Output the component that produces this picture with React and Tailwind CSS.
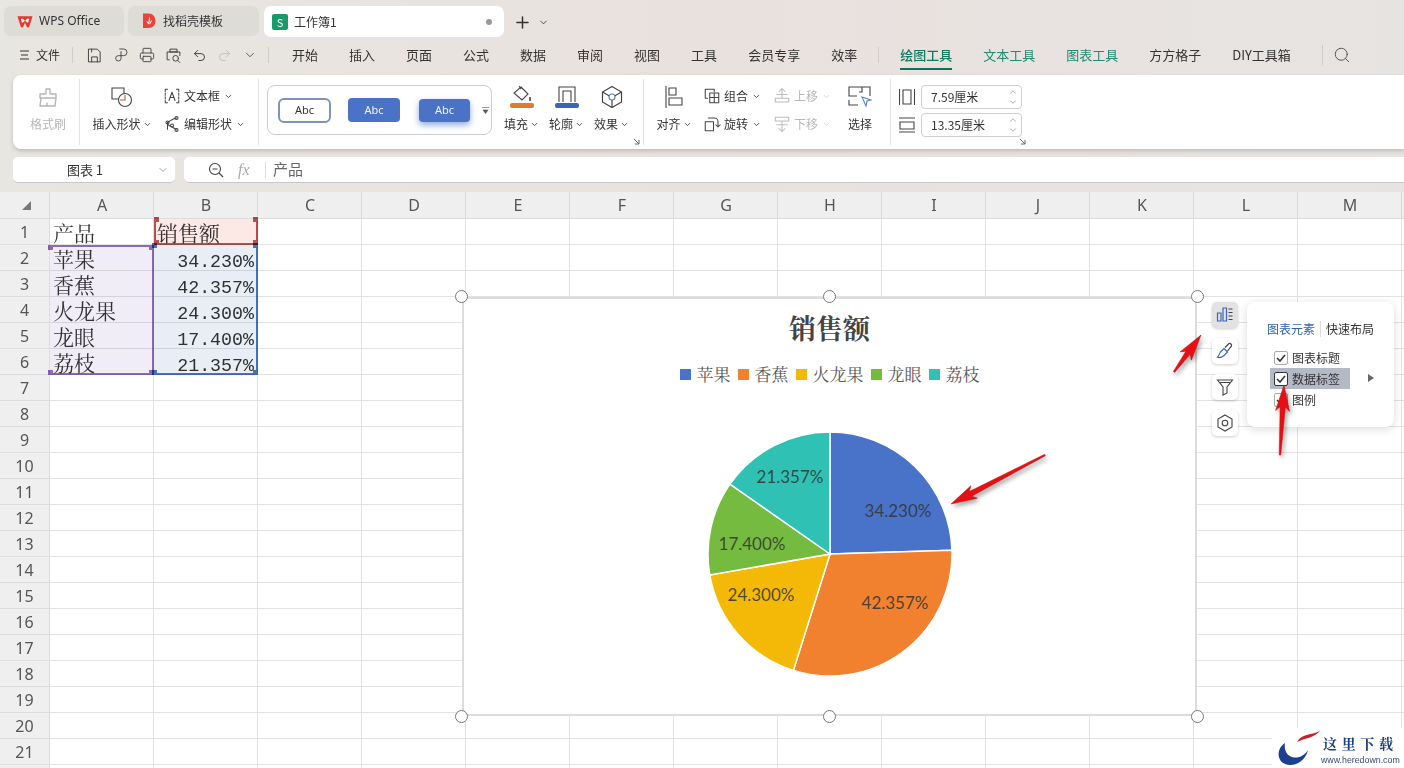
import React from 'react';
import { ChevronDown, ChevronUp, Plus, Printer, Redo2, Search, Undo2 } from 'lucide-react';

const uiFont = { fontFamily: '"Noto Sans CJK SC", "Noto Sans", sans-serif' };
const cellFont = '"Liberation Mono", "Noto Serif CJK SC", "Noto Sans CJK SC", monospace';

const COLS = ['A', 'B', 'C', 'D', 'E', 'F', 'G', 'H', 'I', 'J', 'K', 'L', 'M', ''];
const ROWS = Array.from({ length: 22 }, (_, i) => i + 1);

const TABLE = {
  '1-0': '产品',
  '1-1': '销售额',
  '2-0': '苹果',
  '2-1': '34.230%',
  '3-0': '香蕉',
  '3-1': '42.357%',
  '4-0': '火龙果',
  '4-1': '24.300%',
  '5-0': '龙眼',
  '5-1': '17.400%',
  '6-0': '荔枝',
  '6-1': '21.357%',
};

const PIE = [
  { name: '苹果', value: 34.23, color: '#4873c8', label: '34.230%', x: 193, y: 82 },
  { name: '香蕉', value: 42.357, color: '#f1812f', label: '42.357%', x: 190, y: 174 },
  { name: '火龙果', value: 24.3, color: '#f4b906', label: '24.300%', x: 56, y: 166 },
  { name: '龙眼', value: 17.4, color: '#74bb3f', label: '17.400%', x: 47, y: 115 },
  { name: '荔枝', value: 21.357, color: '#2fc1b4', label: '21.357%', x: 85, y: 48 },
];

function Ico({ size = 20, children, className = '', stroke = '#444' }) {
  return (
    <svg width={size} height={size} viewBox="0 0 24 24" fill="none" stroke={stroke} strokeWidth="1.4" strokeLinecap="round" strokeLinejoin="round" className={`shrink-0 ${className}`}>
      {children}
    </svg>
  );
}

function Caret({ gray }) {
  return <ChevronDown size={9} strokeWidth={2.4} className={gray ? 'text-gray-300 shrink-0' : 'text-gray-700 shrink-0'} />;
}

function BigBtn({ icon, label, caret, width, gray }) {
  return (
    <div className={`flex flex-col items-center shrink-0 ${width}`}>
      <div className="h-[32px] flex items-center justify-center">{icon}</div>
      <div className={`mt-[2px] flex items-center gap-[2px] text-[12px] leading-[18px] ${gray ? 'text-[#b5b5b5]' : 'text-[#333]'}`}>
        {label}
        {caret && <Caret />}
      </div>
    </div>
  );
}

function SmallBtn({ icon, label, gray }) {
  return (
    <div className={`flex items-center h-[18px] text-[12px] ${gray ? 'text-[#b8b8b8]' : 'text-[#333]'}`}>
      <div className="w-[18px] flex justify-center mr-[3px]">{icon}</div>
      <span>{label}</span>
      <span className="ml-[4px]"><Caret gray={gray} /></span>
    </div>
  );
}

function Launcher() {
  return (
    <svg width="7" height="7" viewBox="0 0 7 7" fill="none" stroke="#666" strokeWidth="1" className="absolute right-[3px] bottom-0">
      <path d="M1 1l5 5M6 2v4H2" />
    </svg>
  );
}

function SizeInput({ value }) {
  return (
    <div className="w-[101px] h-[24px] bg-white border border-[#cfcfcf] rounded-[4px] flex items-center justify-between pl-[9px] pr-[3px] text-[12px] text-[#333]">
      <span>{value}</span>
      <div className="flex flex-col text-gray-500">
        <ChevronUp size={10} strokeWidth={1.4} />
        <ChevronDown size={10} strokeWidth={1.4} />
      </div>
    </div>
  );
}

function TopTabs() {
  return (
    <div className="h-[37px] flex items-end gap-[4px] pl-[4px] text-[12px] text-[#333]">
      <div className="w-[120px] h-[30px] rounded-[7px] bg-[#dedcd7] flex items-center pl-[13px] mb-[1px]">
        <svg width="16" height="13" viewBox="0 0 17 13" className="mr-[6px]">
          <path d="M0.5 1H16.5L12.8 12.5H10.6L8.5 7.5L6.4 12.5H4.2Z" fill="#e8372c" />
          <path d="M4 3.5H6.5L8.5 6.5L10.5 3.5H13L11.8 7.5H10.6L8.5 5.2L6.4 7.5H5.2Z" fill="#fff" />
        </svg>
        <span style={{ fontFamily: '"Noto Sans", sans-serif' }}>WPS Office</span>
      </div>
      <div className="w-[131px] h-[30px] rounded-[7px] bg-[#dedcd7] flex items-center pl-[14px] mb-[1px]">
        <svg width="14" height="16" viewBox="0 0 14 16" className="mr-[7px]">
          <path d="M1 0.5H6.5C11 0.5 13.5 4 13.5 8C13.5 12 11 15 6.5 15H1Z" fill="#e8443c" />
          <path d="M7.5 3.5C8 6 8.5 8 6.5 11.5C5.5 10 4.5 9 4.5 8C5.5 8.5 6 8.8 6.5 9.5C7 7.5 6.8 5.5 7.5 3.5ZM10 7C10 9 8.5 10.5 7.3 11.5C7.8 9.5 8.5 8 10 7Z" fill="#fff" />
        </svg>
        <span>找稻壳模板</span>
      </div>
      <div className="w-[240px] h-[31px] ml-[1px] rounded-[7px] bg-white flex items-center pl-[8px]">
        <div className="w-[16px] h-[16px] bg-[#1a9a6c] rounded-[2px] text-white text-[11px] leading-[16px] text-center mr-[6px]">S</div>
        <span>工作簿1</span>
        <span className="ml-auto mr-[12px] w-[6px] h-[6px] rounded-full bg-[#999]" />
      </div>
      <div className="h-[30px] flex items-center ml-[5px] gap-[6px] text-[#333]">
        <Plus size={19} strokeWidth={1.9} />
        <ChevronDown size={11} strokeWidth={1.8} />
      </div>
    </div>
  );
}

function MenuRow() {
  const main = ['开始', '插入', '页面', '公式', '数据', '审阅', '视图', '工具', '会员专享', '效率'];
  return (
    <div className="h-[38px] pb-[2px] flex items-center text-[13px] text-[#333]">
      <div className="flex items-center pl-[20px] w-[72px] text-[12px]">
        <svg width="9" height="10" viewBox="0 0 9 10" stroke="#333" strokeWidth="1" className="mr-[7px]"><path d="M0 1h9M1 5h7M0 9h9" /></svg>
        文件
      </div>
      <div className="w-px h-[16px] bg-[#cfcdc9]" />
      <div className="flex items-center gap-[10px] ml-[13px] w-[183px]">
        <Ico size={17}><path d="M4 3h12l4 4v14H4zM8 21v-7h8v7M8 3v4" /></Ico>
        <Ico size={16}><path d="M10 3h6a5 5 0 010 10h-4v4a4 4 0 11-4-4h4V7" /></Ico>
        <Printer size={16} strokeWidth={1.4} className="text-[#444]" />
        <Ico size={17}><path d="M7 7V3h10v4M6 18H3V7h18v5M7 7h10" /><circle cx="15" cy="16" r="4" /><path d="M18 19l3 3" /></Ico>
        <Undo2 size={15} strokeWidth={1.6} className="text-[#444]" />
        <Redo2 size={15} strokeWidth={1.4} className="text-[#bbb]" />
        <ChevronDown size={14} strokeWidth={1.6} className="text-[#555] ml-[1px]" />
      </div>
      <div className="w-px h-[16px] bg-[#cfcdc9] -ml-[1px]" />
      <div className="flex items-center gap-[31px] ml-[23px]">
        {main.map((m) => <span key={m} className="shrink-0">{m}</span>)}
      </div>
      <div className="w-px h-[16px] bg-[#cfcdc9] ml-[21px] mr-[21px]" />
      <div className="flex items-center gap-[31px]">
        <span className="relative text-[#0f7a5f] font-medium">
          绘图工具
          <span className="absolute left-0 right-0 -bottom-[5px] h-[2px] bg-[#0f6f58]" />
        </span>
        <span className="text-[#1f8a70]">文本工具</span>
        <span className="text-[#1f8a70]">图表工具</span>
        <span>方方格子</span>
        <span className="w-[61px] whitespace-nowrap">DIY工具箱</span>
      </div>
      <div className="w-px h-[20px] bg-[#cfcdc9] ml-[29px] mr-[10px]" />
      <Search size={18} strokeWidth={1.3} className="text-[#555]" />
    </div>
  );
}

function Ribbon() {
  return (
    <div className="ml-[13px] h-[74px] bg-white rounded-l-[8px] shadow-[0_2px_4px_rgba(0,0,0,0.18)] flex items-stretch py-[4px]">
      <div className="w-[67px] shrink-0 border-r border-[#e3e3e3] flex justify-center pt-[2px] pl-[4px]">
        <BigBtn
          gray
          width="w-[40px]"
          label="格式刷"
          icon={
            <Ico size={24} stroke="#b5b5b5">
              <path d="M10 4h4v5h6v4H4V9h6zM5 13l-1 8h15l1-8M11 21v-3" />
            </Ico>
          }
        />
      </div>
      <div className="w-[179px] shrink-0 border-r border-[#e3e3e3] flex pt-[2px]">
        <div className="ml-[12px]">
          <BigBtn
            caret
            width="w-[60px]"
            label="插入形状"
            icon={
              <svg width="22" height="22" viewBox="0 0 22 22" fill="none" stroke="#444" strokeWidth="1.1">
                <path d="M1 2h12v11H1z" />
                <circle cx="14" cy="14" r="6.5" fill="#fff" />
                <path d="M9 14h5V9" stroke="#d0532a" />
              </svg>
            }
          />
        </div>
        <div className="ml-[11px] flex flex-col gap-[10px] pt-[6px]">
          <SmallBtn
            label="文本框"
            icon={
              <Ico size={18}>
                <path d="M3 3v18M21 3v18M3 3h3M3 21h3M18 3h3M18 21h3" strokeDasharray="3 2" />
                <path d="M8 18l4-11 4 11M9.5 14h5" />
              </Ico>
            }
          />
          <SmallBtn
            label="编辑形状"
            icon={
              <Ico size={18}>
                <path d="M6 10c4-2 8-6 12-6M6 10c0 4 6 6 6 6s4 2 6 4M6 10L6 19" />
                <circle cx="18" cy="4" r="2" /><circle cx="6" cy="10" r="2" /><circle cx="18" cy="20" r="2" /><circle cx="12" cy="14" r="2" />
              </Ico>
            }
          />
        </div>
      </div>
      <div className="ml-[8px] mt-[6px] h-[50px] w-[225px] shrink-0 border border-[#c9ccd4] rounded-[8px] flex items-center pl-[10px] text-[11px]" style={{ fontFamily: '"Noto Sans", sans-serif' }}>
        <div className="w-[53px] h-[25px] rounded-[6px] bg-white border-2 border-[#7d93bb] text-[#333] flex items-center justify-center">Abc</div>
        <div className="w-[52px] h-[24px] ml-[17px] rounded-[4px] bg-[#4a73c8] text-[#f1f4fb] flex items-center justify-center">Abc</div>
        <div className="w-[51px] h-[23px] ml-[19px] rounded-[4px] bg-[#4a73c8] text-[#f1f4fb] flex items-center justify-center shadow-[0_3px_6px_rgba(68,114,196,0.6)]">Abc</div>
        <svg width="7" height="7" viewBox="0 0 7 7" className="ml-[12px]"><path d="M0 .5h7M1 3h5L3.5 6.5z" stroke="#555" fill="#555" strokeWidth="0.6" /></svg>
      </div>
      <div className="relative w-[152px] shrink-0 border-r border-[#e3e3e3] flex pl-[12px] gap-[10px] pt-[2px]">
        <BigBtn
          caret
          width="w-[35px]"
          label="填充"
          icon={
            <svg width="26" height="24" viewBox="0 0 26 24" fill="none" stroke="#444" strokeWidth="1.1">
              <path d="M12 2l7 7-6 6-8-7zM10 1l2 3" />
              <path d="M21 12v4" strokeWidth="1.6" />
              <rect x="1" y="18" width="24" height="5" rx="2" fill="#e07a2e" stroke="none" />
            </svg>
          }
        />
        <BigBtn
          caret
          width="w-[35px]"
          label="轮廓"
          icon={
            <svg width="26" height="24" viewBox="0 0 26 24" fill="none" stroke="#444" strokeWidth="1.1">
              <path d="M5 17V2h16v15M9 17V6h8v11" />
              <rect x="1" y="18" width="24" height="5" rx="2" fill="#3d64b4" stroke="none" />
            </svg>
          }
        />
        <BigBtn
          caret
          width="w-[35px]"
          label="效果"
          icon={
            <svg width="24" height="24" viewBox="0 0 24 24" fill="none" stroke="#444" strokeWidth="1.2">
              <path d="M12 1.5l9.5 5.5v10L12 22.5 2.5 17V7z" />
              <path d="M2.5 7l7 4M21.5 7l-7 4M12 15v7" />
              <circle cx="12" cy="12" r="3" stroke="#5b7fc7" />
            </svg>
          }
        />
        <Launcher />
      </div>
      <div className="w-[247px] shrink-0 border-r border-[#e3e3e3] flex pt-[2px]">
        <div className="ml-[11px]">
          <BigBtn
            caret
            width="w-[38px]"
            label="对齐"
            icon={
              <svg width="20" height="22" viewBox="0 0 20 22" fill="none" stroke="#444" strokeWidth="1.1">
                <path d="M2 0v22M5 2h7v7H5zM5 12h13v7H5z" />
              </svg>
            }
          />
        </div>
        <div className="ml-[10px] flex flex-col gap-[10px] pt-[6px] w-[69px]">
          <SmallBtn
            label="组合"
            icon={
              <Ico size={18}>
                <path d="M3 3h12v3M3 3v12h3M9 8h12v13H9zM15 8v13M9 14h12" />
              </Ico>
            }
          />
          <SmallBtn
            label="旋转"
            icon={
              <Ico size={18}>
                <path d="M3 9h11v12H3zM7 4h8a5 5 0 015 5v6M17 13l3 3 3-3" />
              </Ico>
            }
          />
        </div>
        <div className="ml-[1px] flex flex-col gap-[10px] pt-[6px] w-[69px]">
          <SmallBtn
            gray
            label="上移"
            icon={
              <Ico size={18} stroke="#bbb">
                <path d="M12 15V3M8 6l4-4 4 4M5 10h14M3 15h18v5H3z" />
              </Ico>
            }
          />
          <SmallBtn
            gray
            label="下移"
            icon={
              <Ico size={18} stroke="#bbb">
                <path d="M3 3h18v5H3zM5 13h14M12 8v13M8 18l4 4 4-4" />
              </Ico>
            }
          />
        </div>
        <BigBtn
          width="w-[36px]"
          label="选择"
          icon={
            <svg width="24" height="22" viewBox="0 0 24 22" fill="none" stroke="#444" strokeWidth="1.1">
              <path d="M1 4V1h21v9M1 4v6h8M1 14v5h9M14 1v5h-3" />
              <path d="M14 11l9 3-4 1-1 5z" stroke="#5b7fc7" />
            </svg>
          }
        />
      </div>
      <div className="relative w-[140px] shrink-0 flex flex-col gap-[4px] pl-[8px] pt-[6px]">
        <div className="flex items-center gap-[6px]">
          <svg width="16" height="16" viewBox="0 0 16 16" fill="none" stroke="#444" strokeWidth="1.1"><path d="M0.5 0v16M15.5 0v16M4 1h8v14H4z" /></svg>
          <SizeInput value="7.59厘米" />
        </div>
        <div className="flex items-center gap-[6px]">
          <svg width="16" height="16" viewBox="0 0 16 16" fill="none" stroke="#444" strokeWidth="1.1"><path d="M0 1h16M0 15h16M1 5h14v7H1z" /></svg>
          <SizeInput value="13.35厘米" />
        </div>
        <div className="absolute left-[128px] bottom-0 w-[10px] h-[10px]"><Launcher /></div>
      </div>
    </div>
  );
}

function FormulaBar() {
  return (
    <div className="mt-[8px] h-[26px] flex gap-[9px] pl-[13px] text-[13px] text-[#333]">
      <div className="w-[162px] bg-white rounded-[5px] border-b border-[#c8c8c8] flex items-center">
        <span className="flex-1 text-center pl-[8px] pr-[8px] text-[13px]">图表 1</span>
        <ChevronDown size={12} strokeWidth={1.4} className="mr-[6px] text-gray-500" />
      </div>
      <div className="flex-1 bg-white rounded-l-[5px] border-b border-[#c8c8c8] flex items-center">
        <svg width="16" height="16" viewBox="0 0 16 16" fill="none" stroke="#444" strokeWidth="1.1" className="ml-[24px]">
          <circle cx="7" cy="7" r="5.5" /><path d="M4.5 7h5M11 11l4 4" />
        </svg>
        <span className="ml-[14px] text-[16px] text-[#aaa] italic w-[27px]" style={{ fontFamily: '"Liberation Serif", serif' }}>fx</span>
        <span className="w-px h-[16px] bg-[#ddd] mr-[7px]" />
        <span className="text-[#666] text-[15px]">产品</span>
      </div>
    </div>
  );
}

function Cell({ row, col, text }) {
  const isNumber = text && text.endsWith('%');
  return (
    <div
      className={`border-r border-b border-[#e2e2e2] bg-white whitespace-nowrap pt-[4px] leading-[26px] text-[#333] ${isNumber ? 'text-right text-[18.3px] pr-[3px]' : 'text-left text-[21px] pl-[3px]'}`}
      style={{ gridRow: row + 1, gridColumn: col + 2, fontFamily: cellFont }}
    >
      {text}
    </div>
  );
}

function RangeBox({ className, color, fill }) {
  const dot = `absolute w-[5px] h-[5px] ${color}`;
  return (
    <div className={`relative z-10 pointer-events-none mix-blend-multiply ${className} ${fill}`}>
      <span className={`${dot} -left-[2px] -top-[2px]`} />
      <span className={`${dot} -right-[2px] -top-[2px]`} />
      <span className={`${dot} -left-[2px] -bottom-[2px]`} />
      <span className={`${dot} -right-[2px] -bottom-[2px]`} />
    </div>
  );
}

function Handle({ className }) {
  return <span className={`absolute w-[13px] h-[13px] rounded-full bg-white border border-[#777] ${className}`} />;
}

function polar(cx, cy, r, deg) {
  const a = ((deg - 90) * Math.PI) / 180;
  return [cx + r * Math.cos(a), cy + r * Math.sin(a)];
}

function PieChart() {
  const total = PIE.reduce((s, p) => s + p.value, 0);
  let angle = 0;
  return (
    <svg width="250" height="250" viewBox="0 0 250 250" className="mt-[43px]">
      {PIE.map((p) => {
        const sweep = (p.value / total) * 360;
        const [x1, y1] = polar(125, 125, 122, angle);
        const [x2, y2] = polar(125, 125, 122, angle + sweep);
        const large = sweep > 180 ? 1 : 0;
        angle += sweep;
        return (
          <path key={p.name} d={`M125 125L${x1} ${y1}A122 122 0 ${large} 1 ${x2} ${y2}Z`} fill={p.color} stroke="#fff" strokeWidth="1.5" />
        );
      })}
      {PIE.map((p) => (
        <text key={p.label} x={p.x} y={p.y + 6} textAnchor="middle" fontSize="17" fill="#333" fillOpacity="0.85" style={{ fontFamily: 'Lato, sans-serif' }}>
          {p.label}
        </text>
      ))}
    </svg>
  );
}

function Chart() {
  return (
    <div className="absolute left-[462px] top-[105px] w-[735px] h-[419px] bg-white border-2 border-[#dcdcdc] flex flex-col items-center z-20">
      <div className="mt-[11px] text-[27px] leading-[36px] font-bold text-[#444]" style={{ fontFamily: '"Noto Serif CJK SC", "Noto Sans CJK SC", serif' }}>销售额</div>
      <div className="mt-[16px] flex items-center gap-[7px] h-[24px] text-[17px] text-[#595959]" style={{ fontFamily: '"Noto Serif CJK SC", "Noto Sans CJK SC", serif' }}>
        {PIE.map((p) => (
          <div key={p.name} className="flex items-center gap-[6px]">
            <span className="w-[11px] h-[11px]" style={{ background: p.color }} />
            <span>{p.name}</span>
          </div>
        ))}
      </div>
      <PieChart />
      <Handle className="-left-[9px] -top-[9px]" />
      <Handle className="left-[359px] -top-[9px]" />
      <Handle className="-right-[9px] -top-[9px]" />
      <Handle className="-left-[9px] -bottom-[9px]" />
      <Handle className="left-[359px] -bottom-[9px]" />
      <Handle className="-right-[9px] -bottom-[9px]" />
    </div>
  );
}

function SideButton({ active, children }) {
  return (
    <div className={`w-[26px] h-[26px] rounded-[5px] flex items-center justify-center shadow-[0_1px_3px_rgba(0,0,0,0.2)] ${active ? 'bg-[#e2e2e2]' : 'bg-white'}`}>
      {children}
    </div>
  );
}

function CheckItem({ label, active }) {
  return (
    <div className={`h-[21px] w-[80px] flex items-center pl-[4px] gap-[4px] text-[12px] text-[#333] ${active ? 'bg-[#b4b9c6]' : ''}`}>
      <span className={`w-[14px] h-[14px] rounded-[2px] bg-white flex items-center justify-center border ${active ? 'border-[#333]' : 'border-[#aaa]'}`}>
        <svg width="10" height="8" viewBox="0 0 10 8" fill="none" stroke="#333" strokeWidth="1.6"><path d="M1 4l3 3 5-6" /></svg>
      </span>
      <span>{label}</span>
    </div>
  );
}

function ChartTools() {
  return (
    <div className="absolute left-[1212px] top-[110px] flex gap-[9px] z-20">
      <div className="flex flex-col gap-[10px]">
        <SideButton active>
          <svg width="18" height="18" viewBox="0 0 18 18" fill="none" stroke="#3d64b4" strokeWidth="1.2">
            <path d="M1.5 7H5v8H1.5zM7 2h3.5v13H7z" />
            <path d="M12.5 3h4M12.5 6.5h4M12.5 10h4M12.5 13.5h4" stroke="#444" />
          </svg>
        </SideButton>
        <SideButton>
          <svg width="18" height="18" viewBox="0 0 18 18" fill="none" stroke="#3d64b4" strokeWidth="1.2">
            <path d="M8 6.5l3.5 3.5-3.5 3.5C5.5 15.5 3 15.8 1.5 15.2 3 14 3 12 4.5 10z" />
            <path d="M9 5.5l4-4c1.2-.8 3.2 1.2 2.4 2.6L11.5 9" stroke="#444" />
          </svg>
        </SideButton>
        <SideButton>
          <svg width="18" height="18" viewBox="0 0 18 18" fill="none" stroke="#444" strokeWidth="1.1">
            <path d="M1.5 2h15L11 9v6l-4 2V9zM4 4.5h10" />
          </svg>
        </SideButton>
        <SideButton>
          <svg width="18" height="18" viewBox="0 0 18 18" fill="none" stroke="#444" strokeWidth="1.1">
            <path d="M9 1l7 4v8l-7 4-7-4V5z" />
            <circle cx="9" cy="9" r="2.8" />
          </svg>
        </SideButton>
      </div>
      <div className="relative w-[147px] h-[125px] bg-white rounded-[8px] shadow-[0_2px_10px_rgba(0,0,0,0.15)] text-[#333]">
        <div className="flex items-center h-[18px] mt-[18px] pl-[20px] text-[12px]">
          <span className="text-[#2f5fae]">图表元素</span>
          <span className="w-px h-[16px] bg-[#ddd] mx-[5px]" />
          <span>快速布局</span>
        </div>
        <div className="mt-[9px] ml-[23px] flex flex-col">
          <CheckItem label="图表标题" />
          <CheckItem label="数据标签" active />
          <CheckItem label="图例" />
        </div>
        <span className="absolute left-[121px] top-[72px] w-0 h-0 border-y-[4px] border-y-transparent border-l-[6px] border-l-[#666]" />
      </div>
    </div>
  );
}

function RedArrow({ x1, y1, x2, y2 }) {
  const len = Math.hypot(x2 - x1, y2 - y1);
  const ux = (x2 - x1) / len;
  const uy = (y2 - y1) / len;
  const nx = -uy;
  const ny = ux;
  const at = (along, off) => `${x1 + ux * along + nx * off},${y1 + uy * along + ny * off}`;
  const neck = len - 22;
  const points = [at(0, -0.8), at(neck, -2.6), at(neck - 4, -7), at(len, 0), at(neck - 4, 7), at(neck, 2.6), at(0, 0.8)].join(' ');
  return <polygon points={points} fill="#e60f14" stroke="#c40c10" strokeWidth="0.5" style={{ filter: 'drop-shadow(2px 3px 2px rgba(0,0,0,0.35))' }} />;
}

function Watermark() {
  return (
    <div className="absolute right-0 bottom-0 w-[132px] h-[40px] bg-white z-30">
      <svg width="50" height="40" viewBox="0 0 50 40" className="absolute left-0 top-0">
        <path d="M13 15C5 20 4 32 13 36C23 40 34 32 36 22C32 28 26 31 20 29C14 27 12 21 13 15Z" fill="#1d3f8f" />
        <path d="M25 14C30 5 38 8 48 3C42 10 33 10 25 14Z" fill="#c8212a" />
      </svg>
      <div className="absolute left-[51px] top-[6px] w-[70px] flex justify-between text-[14px] leading-[18px] font-bold text-[#1d3f7f]" style={{ fontFamily: '"Noto Serif CJK SC", "Noto Sans CJK SC", serif' }}>
        <span>这</span><span>里</span><span>下</span><span>载</span>
      </div>
      <div className="absolute left-[49px] top-[25px] text-[8.8px] leading-[14px] text-[#3a4a78]" style={{ fontFamily: '"Liberation Sans", sans-serif' }}>www.heredown.com</div>
    </div>
  );
}

function Sheet() {
  return (
    <div className="relative mt-[9px] h-[576px] overflow-hidden">
      <div className="grid grid-cols-[50px_repeat(14,104px)] grid-rows-[27px_repeat(22,26px)]">
        <div className="bg-[#efefef] border-r border-b border-[#dcdcdc] flex items-center justify-center" style={{ gridRow: 1, gridColumn: 1 }}>
          <span className="ml-[3px] mt-[1px] w-0 h-0 border-l-[9px] border-l-transparent border-b-[9px] border-b-[#777]" />
        </div>
        {COLS.map((c, i) => (
          <div key={c || 'x'} className="bg-[#efefef] border-r border-b border-[#dcdcdc] flex items-center justify-center pl-[1px] text-[16px] text-[#555]" style={{ gridRow: 1, gridColumn: i + 2, fontFamily: '"Noto Sans", sans-serif' }}>
            {c}
          </div>
        ))}
        {ROWS.map((r) => (
          <React.Fragment key={r}>
            <div className="bg-[#efefef] border-r border-b border-[#dcdcdc] flex items-center justify-center text-[16px] text-[#555]" style={{ gridRow: r + 1, gridColumn: 1, fontFamily: '"Noto Sans", sans-serif' }}>
              {r < 22 ? r : ''}
            </div>
            {COLS.map((_, i) => <Cell key={i} row={r} col={i} text={TABLE[`${r}-${i}`]} />)}
          </React.Fragment>
        ))}
        <RangeBox className="col-start-3 row-start-2 border-x-2 border-b-2 border-[#b5524e]" color="bg-[#b5524e]" fill="bg-[#f5b5ab]/30" />
        <RangeBox className="col-start-3 row-start-3 row-span-5 border-r-2 border-b-2 border-[#4a72b8]" color="bg-[#4a72b8]" fill="bg-[#4a72b8]/12" />
        <RangeBox className="col-start-2 row-start-3 row-span-5 border-y-2 border-r-2 border-[#8d6bb3]" color="bg-[#8d6bb3]" fill="bg-[#8d6bb3]/12" />
      </div>
      <Chart />
      <ChartTools />
      <Watermark />
    </div>
  );
}

export default function App() {
  return (
    <div className="relative w-full h-[768px] overflow-hidden bg-gradient-to-r from-[#e8e6e0] via-[#e9e1de] to-[#e6e4e2]" style={uiFont}>
      <TopTabs />
      <MenuRow />
      <Ribbon />
      <FormulaBar />
      <Sheet />
      <svg className="absolute inset-0 z-40 pointer-events-none" width="1404" height="768">
        <RedArrow x1={1045} y1={455} x2={951} y2={504} />
        <RedArrow x1={1174} y1={372} x2={1201} y2={335} />
        <RedArrow x1={1280} y1={455} x2={1284} y2={385} />
      </svg>
    </div>
  );
}
